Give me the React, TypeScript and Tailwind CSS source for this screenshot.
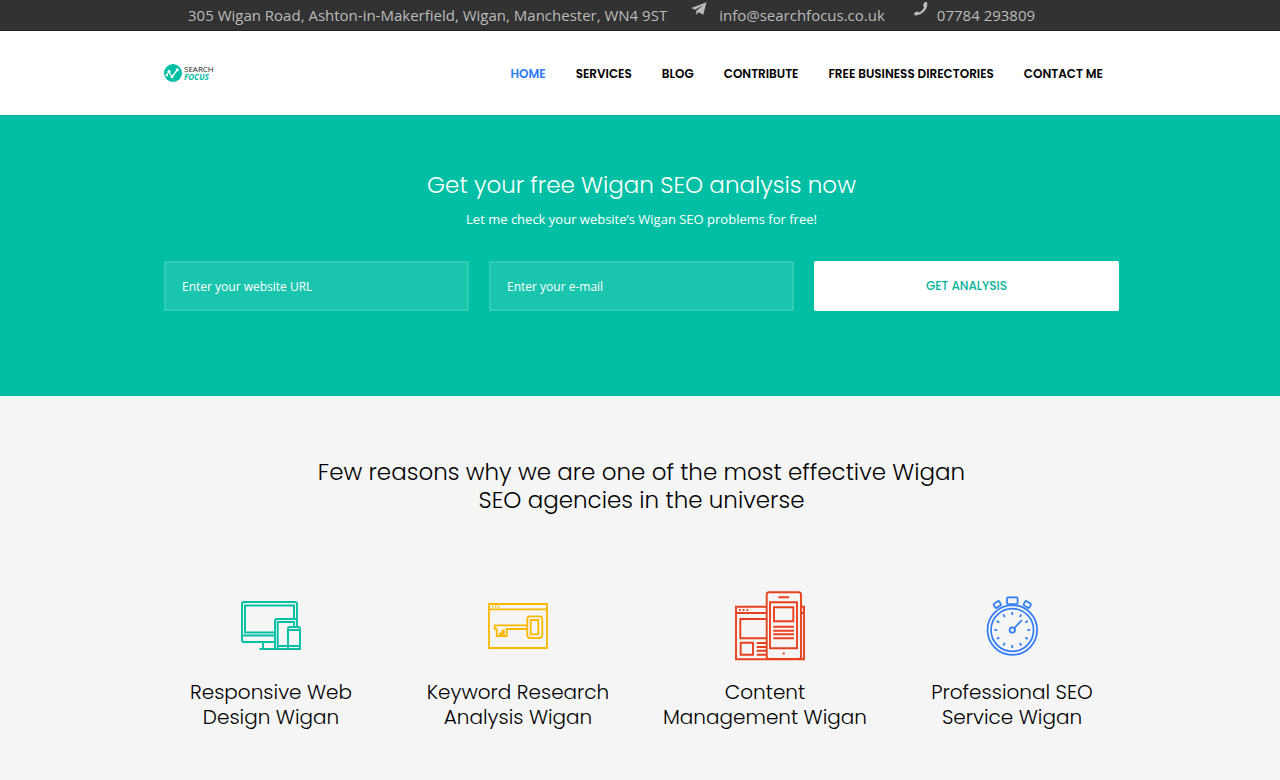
import React from 'react';

interface NavItem {
  label: string;
  active?: boolean;
}

interface Feature {
  lines: [string, string];
  icon: React.ReactNode;
}

const navItems: NavItem[] = [
  { label: 'HOME', active: true },
  { label: 'SERVICES' },
  { label: 'BLOG' },
  { label: 'CONTRIBUTE' },
  { label: 'FREE BUSINESS DIRECTORIES' },
  { label: 'CONTACT ME' },
];

const DevicesIcon = () => (
  <svg width="80" height="72" viewBox="-4 0 80 72" fill="none" stroke="#00bfa5" strokeWidth="1.9" aria-hidden="true">
    <path d="M40 52H9a2 2 0 0 1-2-2V14a2 2 0 0 1 2-2h51a2 2 0 0 1 2 2v15" />
    <path d="M40 42.5H10V15.5h49V29M7 45.5h33M28 52v7M24.5 59H63" />
    <path d="M40 59V31a2 2 0 0 1 2-2h18a2 2 0 0 1 2 2v6M42.7 59V32H59v5M42.7 56H53" />
    <path d="M53 59V38.5a1.5 1.5 0 0 1 1.5-1.5h9a1.5 1.5 0 0 1 1.5 1.5V59zM53 40h12M53 56h12" />
  </svg>
);

const KeyIcon = () => (
  <svg width="80" height="72" viewBox="-4 0 80 72" fill="none" stroke="#fbb800" strokeWidth="1.8" aria-hidden="true">
    <path d="M7 14h58v44H7zM7 19.3h58" />
    <path d="M10 16.7h1.5M13 16.7h1.5M16 16.7h1.5" />
    <path d="M45.5 35.3H12.7V39h2v7H18v-2.5h1.5V46h1v-5.5h1.3V46h3v-7h20.7" />
    <rect x="45.3" y="26.3" width="15" height="21.7" rx="3" />
    <path d="M48.7 30h7.6v14.3h-7.6z" />
  </svg>
);

const ContentIcon = () => (
  <svg width="80" height="72" viewBox="0 0 80 72" fill="none" stroke="#e8401c" strokeWidth="1.9" aria-hidden="true">
    <path d="M41.7 16.7H11v52.6h68V16.7h-3M11 23h30.7M76 23h3" />
    <path d="M14 20h1.7M17.7 20h1.7M21.5 20h1.7" />
    <path d="M41.7 29H15.3v19.3h26.4" />
    <path d="M15.7 52.7H28v12H15.7zM31.7 53h10M31.7 57h10M31.7 60.7h10M31.7 64.7h10" />
    <rect x="41.7" y="2.3" width="34.3" height="66.7" rx="2.5" />
    <path d="M53.3 7.3H64M45 12.3h27v46H45zM49 17.3h19.3v14H49z" />
    <path d="M48.3 36.7H69M48.3 40.7H69M48.3 44.3H69M48.3 48.3H69M57.7 63.5h2" />
  </svg>
);

const StopwatchIcon = () => (
  <svg width="80" height="72" viewBox="0 0 80 72" fill="none" stroke="#2f7bf6" strokeWidth="1.7" aria-hidden="true">
    <circle cx="40.3" cy="40" r="24.8" />
    <circle cx="40.3" cy="40" r="21.3" />
    <circle cx="40.3" cy="40" r="2.7" />
    <path d="M42.3 38L50 30" />
    <rect x="35" y="7.3" width="10.6" height="6.7" rx="1" />
    <rect x="22" y="12" width="6.5" height="5" rx="1" transform="rotate(-32 25.3 14.5)" />
    <rect x="52" y="12" width="6.5" height="5" rx="1" transform="rotate(32 55.3 14.5)" />
    {[0, 30, 60, 90, 120, 150, 180, 210, 240, 270, 300, 330].map((angle) => (
      <path key={angle} d="M40.3 22v3" transform={`rotate(${angle} 40.3 40)`} />
    ))}
  </svg>
);

const features: Feature[] = [
  { lines: ['Responsive Web', 'Design Wigan'], icon: <DevicesIcon /> },
  { lines: ['Keyword Research', 'Analysis Wigan'], icon: <KeyIcon /> },
  { lines: ['Content', 'Management Wigan'], icon: <ContentIcon /> },
  { lines: ['Professional SEO', 'Service Wigan'], icon: <StopwatchIcon /> },
];

const TopBar = () => (
  <div className="bg-[#323232] border-b border-[#222] pl-[3px] font-['Open_Sans','Noto_Sans',sans-serif]">
    <div className="max-w-[955px] mx-auto pl-6 flex items-start text-[15px] leading-[30px] text-[#bbb] whitespace-nowrap">
      <span>305 Wigan Road, Ashton-in-Makerfield, Wigan, Manchester, WN4 9ST</span>
      <svg className="ml-6 mt-0.5 mr-3" width="16" height="14" viewBox="0 0 16 14" fill="currentColor" aria-hidden="true">
        <path d="M15.5.2L.3 5.9l3.6 1.9L12.8 2.7 5.3 8.8v4l2.5-2.6 4.5 2.5z" />
      </svg>
      <a href="#email">info@searchfocus.co.uk</a>
      <svg className="ml-7 mt-0.5 mr-2" width="16" height="14" viewBox="0 0 16 14" fill="currentColor" aria-hidden="true">
        <path d="M11.5.3c1-.4 2-.3 2.6.2.7 3-.5 6.3-2.8 8.8-2.4 2.6-5.5 4.1-8.8 4.2C1.6 13 1 12.2.9 11.2l3.3-2 1.5 1.3c2.5-1 4.4-2.9 5.4-5.3L9.9 3.6z" />
      </svg>
      <a href="#phone">07784 293809</a>
    </div>
  </div>
);

const Header = () => (
  <header className="bg-white pl-[3px]">
    <div className="max-w-[955px] h-[84px] mx-auto pr-4 flex items-center justify-between">
      <a href="#home" className="flex items-center gap-0.5 font-['Open_Sans','Noto_Sans',sans-serif] text-[8px] leading-2">
        <svg width="18" height="18" viewBox="0 0 18 18" aria-hidden="true">
          <circle cx="9" cy="9" r="9" fill="#00bfa5" />
          <path d="M2.5 11.5L5 7.5l3 5.5 5.5-7.5" fill="none" stroke="#fff" strokeWidth="1.3" />
          <g fill="#fff">
            <circle cx="2.8" cy="11.3" r="1.2" />
            <circle cx="5" cy="7.3" r="1.4" />
            <circle cx="8" cy="12.8" r="1.5" />
            <circle cx="13.3" cy="5.7" r="1.5" />
          </g>
        </svg>
        <span>
          <span className="block text-[#222]">SEARCH</span>
          <span className="block font-bold italic text-[#00bfa5]">FOCUS</span>
        </span>
      </a>
      <nav className="pt-0.5 flex gap-[30px] text-[12px] leading-5 font-semibold whitespace-nowrap">
        {navItems.map((item) => (
          <a key={item.label} href="#menu" className={item.active ? 'text-[#2f7bf6]' : 'text-black'}>
            {item.label}
          </a>
        ))}
      </nav>
    </div>
  </header>
);

const inputClass =
  "w-full h-[50px] px-4 border-2 border-white/10 bg-white/10 text-[12px] text-white placeholder:text-white placeholder:opacity-100 font-['Open_Sans','Noto_Sans',sans-serif] outline-none";

const AnalysisForm = () => (
  <section className="bg-[#00bfa5] border-t border-[#00b096] pl-[3px] pt-[55px] pb-[85px] text-white">
    <div className="max-w-[955px] mx-auto">
      <h1 className="text-center text-[23px] leading-7 font-light">Get your free Wigan SEO analysis now</h1>
      <p className="mt-2.5 text-center text-[13px] leading-5 font-medium font-['Open_Sans','Noto_Sans',sans-serif]">
        Let me check your website’s Wigan SEO problems for free!
      </p>
      <form className="mt-8 grid grid-cols-3 gap-5" onSubmit={(e) => e.preventDefault()}>
        <input type="text" aria-label="Enter your website URL" placeholder="Enter your website URL" className={inputClass} />
        <input type="email" aria-label="Enter your e-mail" placeholder="Enter your e-mail" className={inputClass} />
        <button type="submit" className="h-[50px] rounded-xs bg-white text-[12px] font-medium text-[#00b297]">
          GET ANALYSIS
        </button>
      </form>
    </div>
  </section>
);

const Reasons = () => (
  <section className="pl-[3px] pt-[62px] pb-12">
    <h2 className="text-center text-[23px] leading-7 font-light">
      Few reasons why we are one of the most effective Wigan
      <br />
      SEO agencies in the universe
    </h2>
    <div className="max-w-[988px] mx-auto mt-19 grid grid-cols-4">
      {features.map((feature) => (
        <div key={feature.lines[0]} className="flex flex-col items-center text-center">
          {feature.icon}
          <h3 className="mt-[18px] text-[20px] leading-[25px] font-light whitespace-nowrap">
            {feature.lines[0]}
            <br />
            {feature.lines[1]}
          </h3>
        </div>
      ))}
    </div>
  </section>
);

export default function App() {
  return (
    <div className="min-h-screen bg-[#f5f5f5] text-black font-['Poppins','Inter',sans-serif]">
      <TopBar />
      <Header />
      <AnalysisForm />
      <Reasons />
    </div>
  );
}
